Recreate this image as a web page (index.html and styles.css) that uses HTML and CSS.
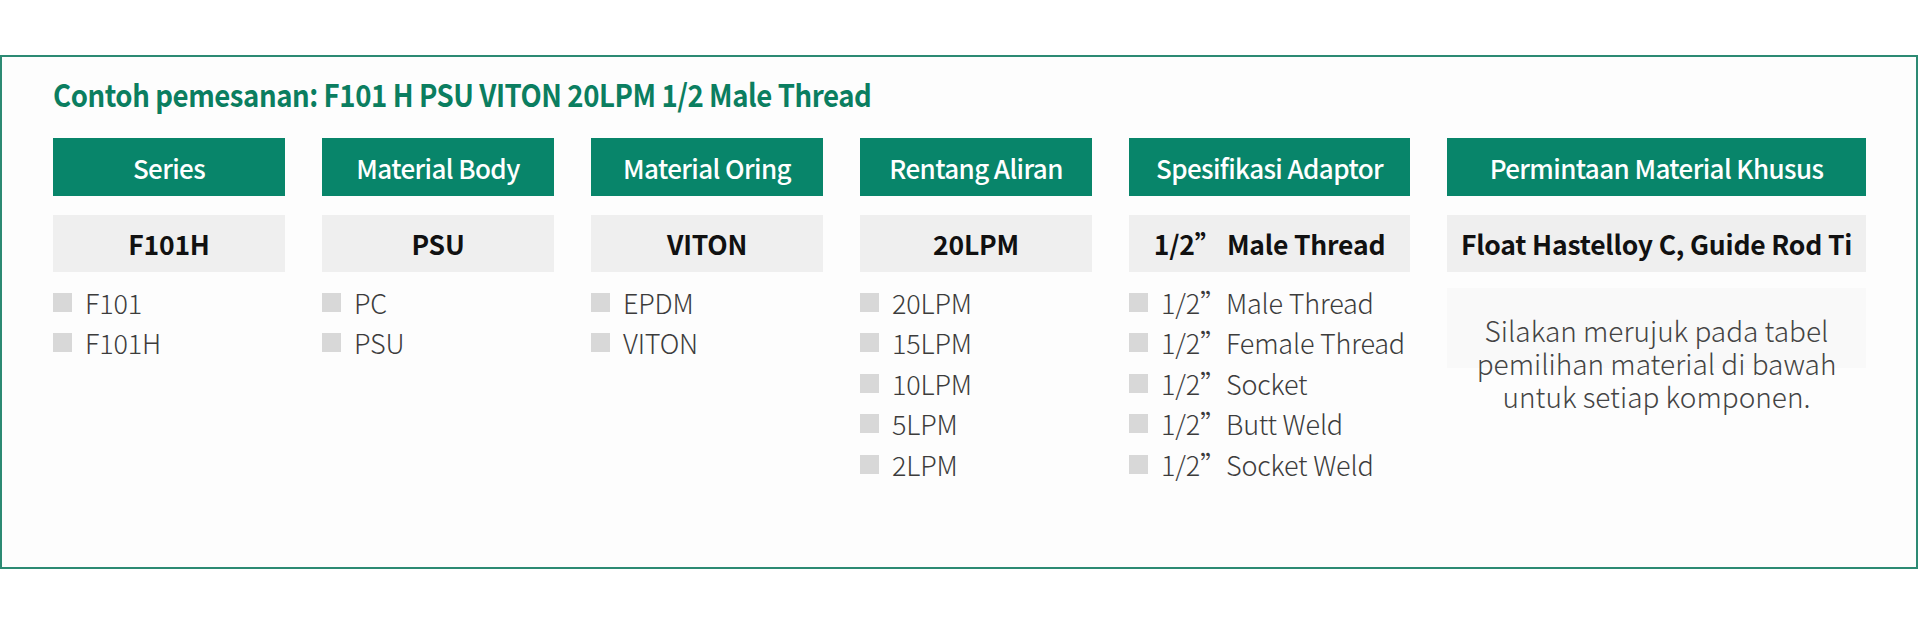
FILE: index.html
```html
<!DOCTYPE html>
<html lang="id">
<head>
<meta charset="utf-8">
<title>Contoh pemesanan</title>
<link rel="stylesheet" href="styles.css">
</head>
<body>
<div class="panel">
  <h1 class="title"><span class="title-text">Contoh pemesanan: F101 H PSU VITON 20LPM 1/2 Male Thread</span></h1>
  <div class="grid">
    <div class="col">
      <div class="head">Series</div>
      <div class="value">F101H</div>
      <ul class="list">
        <li><span class="sq"></span>F101</li>
        <li><span class="sq"></span>F101H</li>
      </ul>
    </div>
    <div class="col">
      <div class="head">Material Body</div>
      <div class="value">PSU</div>
      <ul class="list">
        <li><span class="sq"></span>PC</li>
        <li><span class="sq"></span>PSU</li>
      </ul>
    </div>
    <div class="col">
      <div class="head">Material Oring</div>
      <div class="value">VITON</div>
      <ul class="list">
        <li><span class="sq"></span>EPDM</li>
        <li><span class="sq"></span>VITON</li>
      </ul>
    </div>
    <div class="col">
      <div class="head">Rentang Aliran</div>
      <div class="value">20LPM</div>
      <ul class="list">
        <li><span class="sq"></span>20LPM</li>
        <li><span class="sq"></span>15LPM</li>
        <li><span class="sq"></span>10LPM</li>
        <li><span class="sq"></span>5LPM</li>
        <li><span class="sq"></span>2LPM</li>
      </ul>
    </div>
    <div class="col">
      <div class="head">Spesifikasi Adaptor</div>
      <div class="value"><span class="vsize">1/2”</span>Male Thread</div>
      <ul class="list">
        <li><span class="sq"></span><span class="size">1/2”</span>Male Thread</li>
        <li><span class="sq"></span><span class="size">1/2”</span>Female Thread</li>
        <li><span class="sq"></span><span class="size">1/2”</span>Socket</li>
        <li><span class="sq"></span><span class="size">1/2”</span>Butt Weld</li>
        <li><span class="sq"></span><span class="size">1/2”</span>Socket Weld</li>
      </ul>
    </div>
    <div class="col">
      <div class="head">Permintaan Material Khusus</div>
      <div class="value">Float Hastelloy C, Guide Rod Ti</div>
      <div class="note">
        <div class="note-line">Silakan merujuk pada tabel</div>
        <div class="note-line">pemilihan material di bawah</div>
        <div class="note-line">untuk setiap komponen.</div>
      </div>
    </div>
  </div>
</div>
</body>
</html>
```
FILE: styles.css
```css
html, body {
  margin: 0;
  padding: 0;
  background: #ffffff;
}
body {
  font-family: "Noto Sans CJK SC", "Noto Sans", sans-serif;
  width: 1920px;
  height: 624px;
  overflow: hidden;
}
.panel {
  box-sizing: border-box;
  margin-top: 55px;
  width: 1918px;
  height: 514px;
  border: 2px solid #2c8a73;
  background: #fdfdfd;
  padding: 17px 0 0 51px;
}
.title {
  margin: 0;
  font-size: 31px;
  line-height: 40px;
  font-weight: 700;
  color: #0b7e60;
  letter-spacing: -0.5px;
  white-space: nowrap;
}
.title-text {
  display: inline-block;
  transform: scaleX(0.89);
  transform-origin: left center;
}
.grid {
  margin-top: 24px;
  display: grid;
  grid-template-columns: 232px 232px 232px 232px 281px 419px;
  column-gap: 37px;
}
.col {
  display: flex;
  flex-direction: column;
}
.head {
  height: 58px;
  background: #08856a;
  color: #ffffff;
  display: flex;
  align-items: center;
  justify-content: center;
  font-size: 26px;
  font-weight: 500;
  letter-spacing: -0.6px;
}
.value {
  margin-top: 19px;
  height: 57px;
  background: #efefef;
  color: #111111;
  display: flex;
  align-items: center;
  justify-content: center;
  font-size: 26.5px;
  font-weight: 700;
  letter-spacing: -0.2px;
  white-space: nowrap;
}
.vsize {
  margin-right: 6px;
}
.list {
  list-style: none;
  margin: 10px 0 0 0;
  padding: 0;
}
.list li {
  height: 40.5px;
  display: flex;
  align-items: center;
  font-size: 27px;
  font-weight: 300;
  color: #3c3c3c;
  letter-spacing: -0.2px;
  white-space: nowrap;
}
.sq {
  width: 19px;
  height: 19px;
  background: #d8d8d8;
  margin-right: 13px;
  flex: none;
}
.size {
  display: inline-block;
  width: 65px;
  flex: none;
}
.note {
  margin-top: 16px;
  height: 80px;
  background: #f9f9f9;
  text-align: center;
  font-size: 28px;
  font-weight: 300;
  color: #444444;
  padding-top: 26px;
  box-sizing: border-box;
  white-space: nowrap;
}
.note-line {
  height: 33px;
  line-height: 33px;
}
```
